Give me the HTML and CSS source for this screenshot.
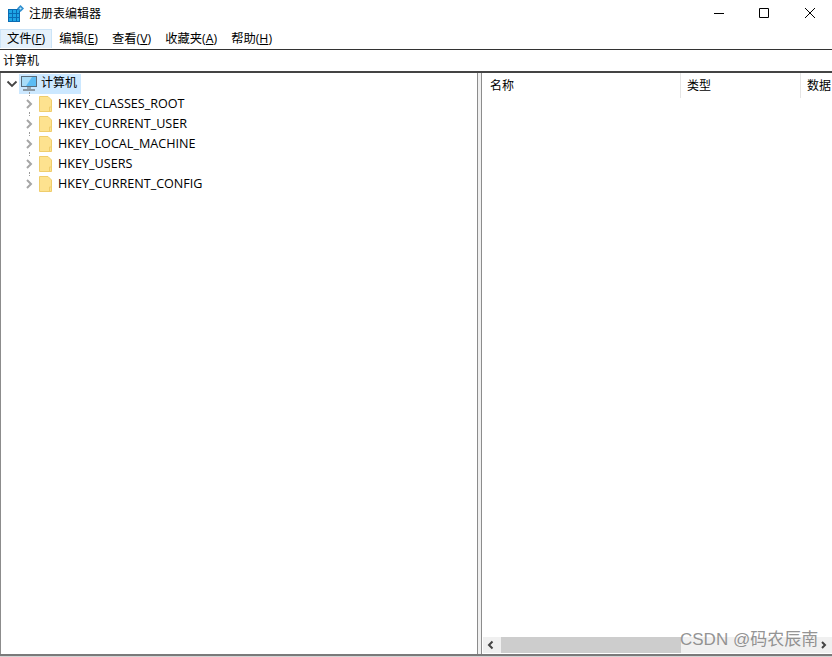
FILE: index.html
```html
<!DOCTYPE html>
<html lang="zh-CN">
<head>
  <meta charset="UTF-8">
  <title>注册表编辑器</title>
  <link rel="stylesheet" href="styles.css">
</head>
<body>
  <div class="window">
    <div class="titlebar">
      <svg class="app-icon" width="16" height="17" viewBox="0 0 16 17">
        <path fill="#0a6cb4" d="M0 4h12v13H0z"/>
        <path fill="#1ea6e6" d="M1 5h3v3H1zM5 5h3v3H5zM9 5h2v3H9zM1 9h3v3H1zM5 9h3v3H5zM9 9h2v3H9zM1 13h3v3H1zM5 13h3v3H5zM9 13h2v3H9z"/>
        <path fill="#2f8fd0" d="M12.500 0L16 3.500 12.500 7 9 3.500z"/>
        <path fill="#bfe6f8" d="M12.500 2.200l1.300 1.300-1.300 1.300-1.300-1.300z"/>
      </svg>
      <span class="title-text">注册表编辑器</span>
      <div class="win-buttons">
        <svg class="win-btn" width="46" height="26" viewBox="0 0 46 26"><path d="M18 13.500h10" stroke="#000" fill="none"/></svg>
        <svg class="win-btn" width="46" height="26" viewBox="0 0 46 26"><path d="M18.500 8.500h9v9h-9z" stroke="#000" fill="none"/></svg>
        <svg class="win-btn" width="46" height="26" viewBox="0 0 46 26"><path d="M18 8l10 10M28 8L18 18" stroke="#000" fill="none"/></svg>
      </div>
    </div>

    <div class="menubar">
      <div class="menu-item active">文件(<u>F</u>)</div>
      <div class="menu-item">编辑(<u>E</u>)</div>
      <div class="menu-item">查看(<u>V</u>)</div>
      <div class="menu-item">收藏夹(<u>A</u>)</div>
      <div class="menu-item">帮助(<u>H</u>)</div>
    </div>

    <div class="address">计算机</div>

    <div class="panes">
      <div class="tree">
        <div class="tree-row root">
          <svg class="arrow" width="12" height="12" viewBox="0 0 12 12"><path d="M1.500 3.500L6 8l4.500-4.500" stroke="#444" stroke-width="1.800" fill="none"/></svg>
          <div class="root-select">
            <svg class="pc-icon" width="18" height="16" viewBox="0 0 18 16">
              <path fill="#5a6c7c" d="M1 0h16v11H1z"/>
              <path fill="#5cbcf4" d="M2 1h14v9H2z"/>
              <path fill="#a8dcf8" d="M2 1h10L6 10H2z"/>
              <path fill="#9aa6b0" d="M7 11h4v2H7z"/>
              <path fill="#8c98a2" d="M3 13h12v2H3z"/>
            </svg>
            <span class="root-label">计算机</span>
          </div>
        </div>
        <div class="tree-row key">
          <svg class="arrow" width="12" height="12" viewBox="0 0 12 12"><path d="M3 2l4 4-4 4" stroke="#a6a6a6" stroke-width="2" fill="none"/></svg>
          <svg class="folder" width="13" height="16" viewBox="0 0 13 16"><path d="M.5.500h8.500l3.500 3.500v11.500H.5z" fill="#fde28f" stroke="#efcd6c"/><path d="M10.500 15.500V11h2" stroke="#efcd6c" fill="none"/></svg>
          <span class="key-label">HKEY_CLASSES_ROOT</span>
        </div>
        <div class="tree-row key">
          <svg class="arrow" width="12" height="12" viewBox="0 0 12 12"><path d="M3 2l4 4-4 4" stroke="#a6a6a6" stroke-width="2" fill="none"/></svg>
          <svg class="folder" width="13" height="16" viewBox="0 0 13 16"><path d="M.5.500h8.500l3.500 3.500v11.500H.5z" fill="#fde28f" stroke="#efcd6c"/><path d="M10.500 15.500V11h2" stroke="#efcd6c" fill="none"/></svg>
          <span class="key-label">HKEY_CURRENT_USER</span>
        </div>
        <div class="tree-row key">
          <svg class="arrow" width="12" height="12" viewBox="0 0 12 12"><path d="M3 2l4 4-4 4" stroke="#a6a6a6" stroke-width="2" fill="none"/></svg>
          <svg class="folder" width="13" height="16" viewBox="0 0 13 16"><path d="M.5.500h8.500l3.500 3.500v11.500H.5z" fill="#fde28f" stroke="#efcd6c"/><path d="M10.500 15.500V11h2" stroke="#efcd6c" fill="none"/></svg>
          <span class="key-label">HKEY_LOCAL_MACHINE</span>
        </div>
        <div class="tree-row key">
          <svg class="arrow" width="12" height="12" viewBox="0 0 12 12"><path d="M3 2l4 4-4 4" stroke="#a6a6a6" stroke-width="2" fill="none"/></svg>
          <svg class="folder" width="13" height="16" viewBox="0 0 13 16"><path d="M.5.500h8.500l3.500 3.500v11.500H.5z" fill="#fde28f" stroke="#efcd6c"/><path d="M10.500 15.500V11h2" stroke="#efcd6c" fill="none"/></svg>
          <span class="key-label">HKEY_USERS</span>
        </div>
        <div class="tree-row key">
          <svg class="arrow" width="12" height="12" viewBox="0 0 12 12"><path d="M3 2l4 4-4 4" stroke="#a6a6a6" stroke-width="2" fill="none"/></svg>
          <svg class="folder" width="13" height="16" viewBox="0 0 13 16"><path d="M.5.500h8.500l3.500 3.500v11.500H.5z" fill="#fde28f" stroke="#efcd6c"/><path d="M10.500 15.500V11h2" stroke="#efcd6c" fill="none"/></svg>
          <span class="key-label">HKEY_CURRENT_CONFIG</span>
        </div>
      </div>

      <div class="splitter"></div>

      <div class="list">
        <div class="list-header">
          <div class="col col-name">名称</div>
          <div class="col col-type">类型</div>
          <div class="col col-data">数据</div>
        </div>
        <div class="list-body"></div>
        <div class="hscroll">
          <svg class="scroll-arrow left" width="18" height="16" viewBox="0 0 18 16"><path d="M9.500 4.500L6 8l3.500 3.500" stroke="#444" stroke-width="2" fill="none"/></svg>
          <div class="scroll-track"><div class="scroll-thumb"></div></div>
          <svg class="scroll-arrow" width="17" height="16" viewBox="0 0 17 16"><path d="M7 5l3 3-3 3" stroke="#444" stroke-width="2" fill="none"/></svg>
        </div>
      </div>
    </div>
  </div>
  <div class="watermark">CSDN @码农辰南</div>
</body>
</html>
```

FILE: styles.css
```css
* {
  box-sizing: border-box;
}
html, body {
  height: 100%;
}
body {
  margin: 0;
  background-color: #d4d4d4;
  color: black;
  font-family: "Open Sans", "Noto Sans CJK SC", sans-serif;
  font-size: 12px;
  overflow: hidden;
}
.window {
  display: flex;
  flex-direction: column;
  height: 656px;
  background-color: white;
  border-bottom: 2px solid #7a7a7a;
}
.titlebar {
  display: flex;
  align-items: flex-start;
  height: 29px;
  flex: none;
  padding-left: 8px;
}
.app-icon {
  margin: 5px 5px 0 0;
}
.title-text {
  line-height: 27px;
}
.win-buttons {
  display: flex;
  margin-left: auto;
  margin-right: -1px;
}
.win-btn:first-child {
  margin-right: -1px;
}
.menubar {
  display: flex;
  height: 21px;
  flex: none;
  border-bottom: 1px solid #333;
  font-size: 12.3px;
}
.menu-item {
  padding: 0 7px;
  line-height: 20px;
  white-space: nowrap;
}
.menu-item.active {
  background-color: #e5f1fb;
  border: 1px solid #cce4f7;
  border-bottom: 0;
  padding: 0 6px;
  height: 19px;
  line-height: 18px;
}
.address {
  height: 23px;
  flex: none;
  padding-left: 3px;
  line-height: 21px;
  border-bottom: 2px solid #444;
}
.panes {
  display: flex;
  flex: 1;
  min-height: 0;
}
.tree {
  width: 477px;
  flex: none;
  padding-top: 1px;
  border-left: 1px solid #8c8c8c;
}
.tree-row {
  display: flex;
  align-items: center;
  height: 20px;
}
.tree-row.root {
  padding-left: 5px;
}
.tree-row.root .arrow {
  margin-right: 1px;
}
.root-select {
  display: flex;
  align-items: center;
  height: 20px;
  padding-left: 1px;
  background-color: #cce8ff;
}
.root-label {
  padding: 0 4px 2px 3px;
  line-height: 18px;
}
.tree-row.key {
  position: relative;
  padding-left: 23px;
  font-size: 12.600px;
}
.key-label {
  padding-bottom: 2px;
}
.tree-row.key .arrow {
  margin-right: 3px;
}
.tree-row.key::before {
  content: "";
  position: absolute;
  left: 28px;
  top: -2px;
  height: 4px;
  border-left: 1px dotted #999;
}
.folder {
  margin-right: 6px;
}
.splitter {
  width: 5px;
  flex: none;
  background-color: #f0f0f0;
  border-left: 1px solid #8c8c8c;
  border-right: 1px solid #8c8c8c;
}
.list {
  display: flex;
  flex-direction: column;
  flex: 1;
  min-width: 0;
  padding-left: 1px;
  padding-bottom: 1px;
}
.list-header {
  display: flex;
  height: 25px;
  flex: none;
  overflow: hidden;
}
.col {
  padding-left: 6px;
  line-height: 25px;
  border-right: 1px solid #e5e5e5;
  flex: none;
}
.col-name {
  width: 198px;
  padding-left: 7px;
}
.col-type {
  width: 120px;
}
.col-data {
  width: 120px;
}
.list-body {
  flex: 1;
}
.hscroll {
  display: flex;
  height: 16px;
  flex: none;
  background-color: #f0f0f0;
}
.scroll-track {
  flex: 1;
}
.scroll-thumb {
  width: 180px;
  height: 100%;
  background-color: #cdcdcd;
}
.watermark {
  position: absolute;
  top: 625px;
  left: 680px;
  font-family: "Liberation Sans", "Noto Sans CJK SC", sans-serif;
  font-size: 17px;
  color: rgba(120, 120, 120, 0.8);
  white-space: nowrap;
}
```
